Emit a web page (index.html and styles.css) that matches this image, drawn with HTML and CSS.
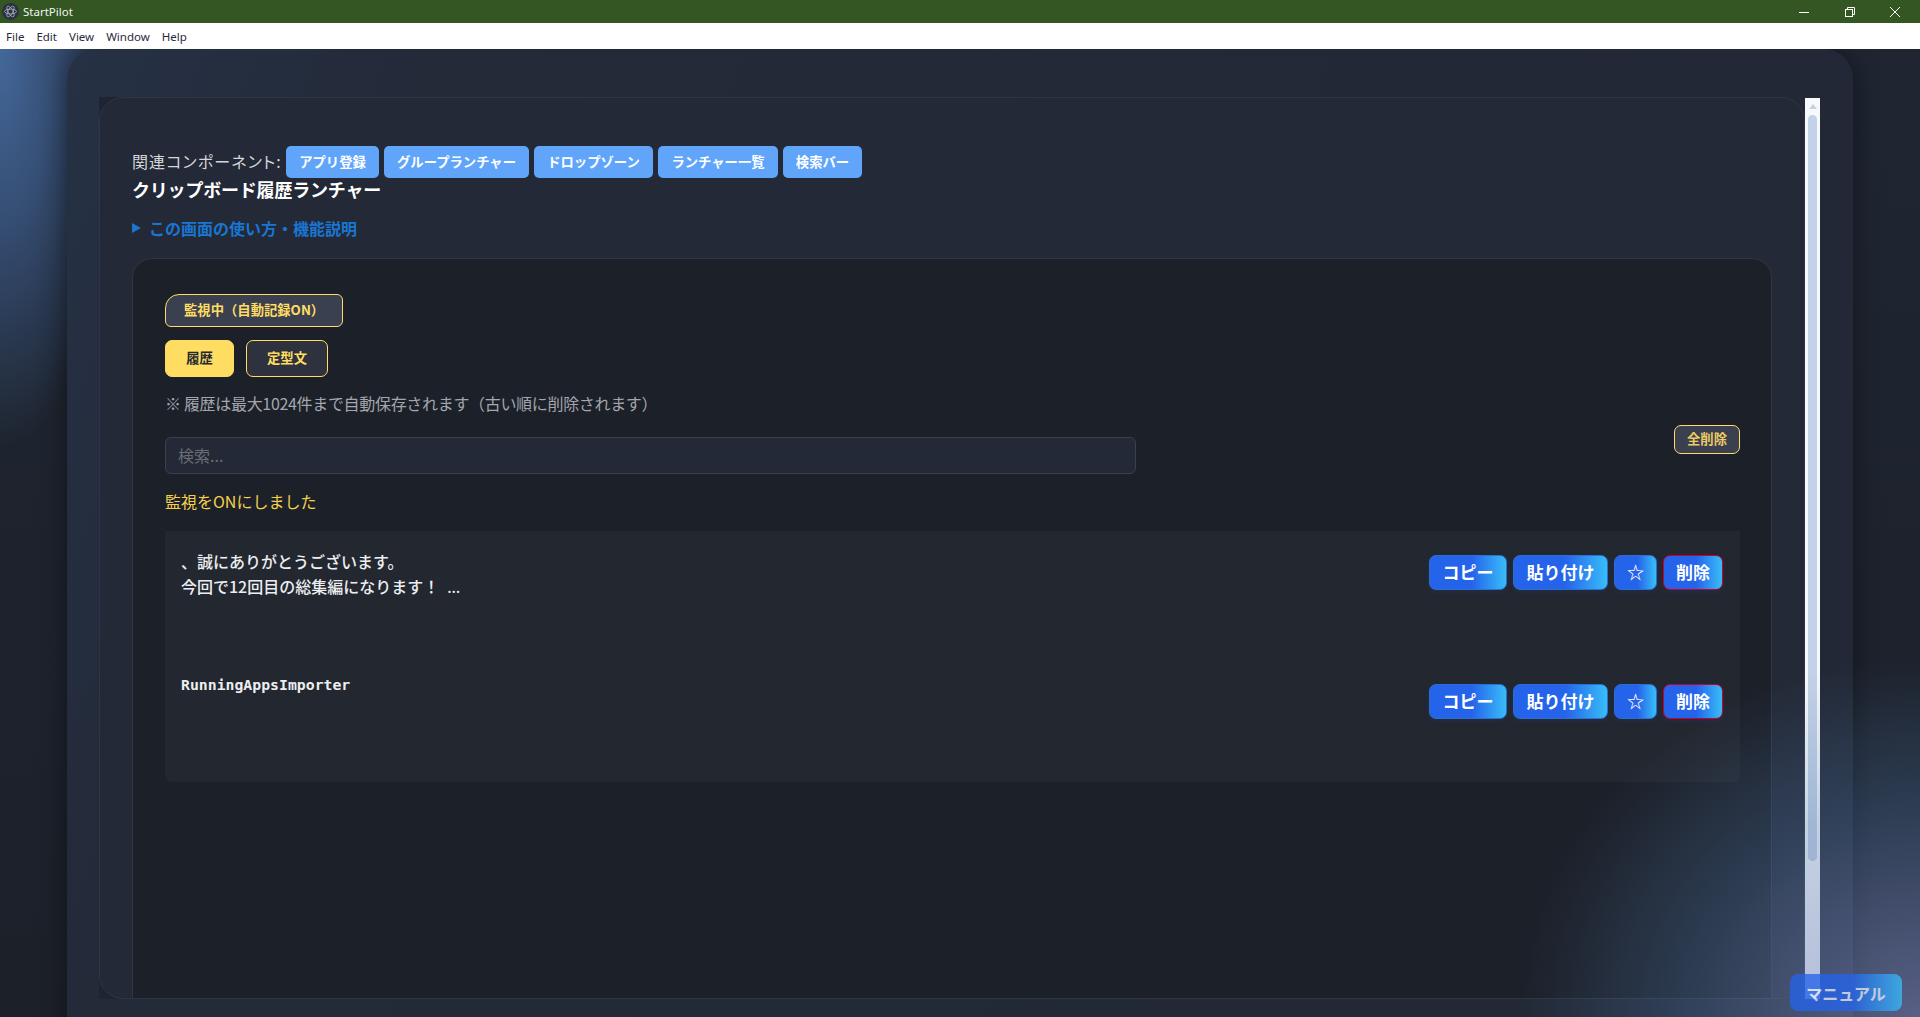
FILE: index.html
```html
<!DOCTYPE html>
<html lang="ja">
<head>
<meta charset="utf-8">
<title>StartPilot</title>
<link rel="stylesheet" href="styles.css">
</head>
<body>
<header class="titlebar">
  <div class="app-id">
    <svg class="app-icon" width="17" height="17" viewBox="0 0 17 17" fill="none" stroke="#a9b4c4" stroke-width="0.8">
      <circle cx="8.5" cy="8.5" r="8.5" fill="#2b3140" stroke="none"/>
      <ellipse cx="8.5" cy="8.5" rx="6" ry="2.4"/>
      <ellipse cx="8.5" cy="8.5" rx="6" ry="2.4" transform="rotate(60 8.5 8.5)"/>
      <ellipse cx="8.5" cy="8.5" rx="6" ry="2.4" transform="rotate(120 8.5 8.5)"/>
    </svg>
    <span>StartPilot</span>
  </div>
  <div class="win-controls">
    <span class="win-btn"><svg width="12" height="12" viewBox="0 0 12 12" stroke="#fff" fill="none"><path d="M1 6.5h10"/></svg></span>
    <span class="win-btn"><svg width="12" height="12" viewBox="0 0 12 12" stroke="#fff" fill="none"><rect x="1.5" y="3.5" width="7" height="7"/><path d="M3.5 3.5v-2h7v7h-2"/></svg></span>
    <span class="win-btn"><svg width="12" height="12" viewBox="0 0 12 12" stroke="#fff" fill="none"><path d="M1 1l10 10M11 1L1 11"/></svg></span>
  </div>
</header>
<nav class="menubar">
  <span>File</span><span>Edit</span><span>View</span><span>Window</span><span>Help</span>
</nav>
<main class="stage">
  <div class="outer">
    <div class="inner-wrap">
      <div class="inner">
        <div class="related">
          <span class="related-label">関連コンポーネント:</span>
          <button class="rel-btn w93">アプリ登録</button>
          <button class="rel-btn w145">グループランチャー</button>
          <button class="rel-btn w119">ドロップゾーン</button>
          <button class="rel-btn w120">ランチャー一覧</button>
          <button class="rel-btn w80">検索バー</button>
        </div>
        <h1 class="title">クリップボード履歴ランチャー</h1>
        <div class="summary"><span class="tri"></span>この画面の使い方・機能説明</div>
        <section class="card">
          <div class="status">監視中（自動記録ON）</div>
          <div class="tabs">
            <button class="tab tab-on">履歴</button>
            <button class="tab tab-off">定型文</button>
          </div>
          <p class="note">※ 履歴は最大1024件まで自動保存されます（古い順に削除されます）</p>
          <div class="search-row">
            <input class="search" placeholder="検索...">
            <button class="clear-all">全削除</button>
          </div>
          <p class="message">監視をONにしました</p>
          <div class="list">
            <div class="row row-first">
              <div class="clip clip-a">、誠にありがとうございます。<br>今回で12回目の総集編になります！<span class="ell">…</span></div>
              <div class="actions">
                <button class="act w78">コピー</button>
                <button class="act w95">貼り付け</button>
                <button class="act w43">☆</button>
                <button class="act w60 danger">削除</button>
              </div>
            </div>
            <div class="row row-second">
              <div class="clip clip-b">RunningAppsImporter</div>
              <div class="actions">
                <button class="act w78">コピー</button>
                <button class="act w95">貼り付け</button>
                <button class="act w43">☆</button>
                <button class="act w60 danger">削除</button>
              </div>
            </div>
          </div>
        </section>
      </div>
      <div class="scrollbar">
        <span class="sb-arrow"></span>
        <span class="sb-thumb"></span>
      </div>
    </div>
  </div>
  <div class="glow"></div>
  <button class="manual">マニュアル</button>
</main>
</body>
</html>
```
FILE: styles.css
```css
* { box-sizing: border-box; }
html, body { margin: 0; height: 100%; overflow: hidden; }
body {
  display: flex;
  flex-direction: column;
  height: 1017px;
  font-family: "Noto Sans CJK JP", "Noto Sans", sans-serif;
  background: #1c2029;
}
button { font-family: inherit; cursor: pointer; }

.titlebar {
  height: 23px;
  flex: none;
  display: flex;
  justify-content: space-between;
  align-items: center;
  background: #335622;
  color: #f2f5ee;
  font: 11.5px "Noto Sans", sans-serif;
}
.app-id { display: flex; align-items: center; gap: 4px; padding-left: 2px; }
.app-icon { display: block; }
.win-controls { display: flex; padding-right: 2px; }
.win-btn { width: 45.5px; height: 23px; display: flex; align-items: center; justify-content: center; }

.menubar {
  height: 26px;
  flex: none;
  display: flex;
  align-items: center;
  gap: 12px;
  padding-left: 6px;
  background: #fff;
  color: #2a2a3a;
  font: 11.5px "Noto Sans", sans-serif;
}

.stage {
  position: relative;
  flex: 1;
  min-height: 0;
  overflow: hidden;
  background:
    radial-gradient(ellipse 130px 400px at 0 0, #44689b 0%, rgba(60,90,135,.75) 45%, rgba(40,55,80,0) 100%),
    linear-gradient(#1f2632, #1c2029);
}
.outer {
  margin-left: 67px;
  width: 1786px;
  height: 1010px;
  padding: 48px 33px 60px 32px;
  border-radius: 30px;
  background: linear-gradient(110deg, #263145 0%, #232a38 18%, #222835 100%);
  box-shadow: 0 0 26px rgba(0,0,0,.45);
}
.inner-wrap {
  display: flex;
  height: 902px;
  background: linear-gradient(90deg, #1e2433 40px, transparent 40px);
}
.inner {
  flex: 1;
  min-width: 0;
  overflow: hidden;
  padding: 48px 32px 0;
  border: 1px solid #2e3544;
  border-radius: 24px;
  background: #232936;
}
.scrollbar {
  flex: none;
  width: 15px;
  margin-top: 1px;
  display: flex;
  flex-direction: column;
  align-items: center;
  background: #f8f9fc;
}
.sb-arrow {
  flex: none;
  width: 0;
  height: 0;
  margin-top: 6px;
  border-left: 4.5px solid transparent;
  border-right: 4.5px solid transparent;
  border-bottom: 5px solid #c3d2e6;
}
.sb-thumb {
  flex: none;
  width: 9px;
  height: 746px;
  margin-top: 6px;
  border-radius: 5px;
  background: #c3d2e6;
}

.related { display: flex; align-items: center; height: 32px; color: #d4d6da; font-size: 16px; }
.related-label { width: 154px; font-feature-settings: "palt"; letter-spacing: 1.1px; white-space: nowrap; position: relative; top: -1px; }
.rel-btn {
  height: 32px;
  margin-right: 5px;
  padding: 0 0 2px;
  border: 0;
  border-radius: 5px;
  background: #60a5fa;
  color: #fff;
  font-size: 13.33px;
  font-weight: 700;
}
.w93 { width: 93px; }
.w145 { width: 145px; }
.w119 { width: 119px; }
.w120 { width: 120px; }
.w80 { width: 79px; margin-right: 0; }

.title {
  margin: 0 0 2px;
  color: #fff;
  font-size: 18px;
  font-weight: 700;
  letter-spacing: -.2px;
  line-height: 22px;
}
.summary {
  display: flex;
  align-items: center;
  margin-top: 17px;
  height: 22px;
  color: #1976d2;
  font-size: 16px;
  font-weight: 700;
}
.tri {
  width: 0;
  height: 0;
  margin-right: 8px;
  border-left: 9px solid #1976d2;
  border-top: 5.5px solid transparent;
  border-bottom: 5.5px solid transparent;
}

.card {
  margin-top: 19px;
  min-height: 900px;
  padding: 35px 31px 0 32px;
  border: 1px solid #2e3544;
  border-radius: 20px;
  background: #1c2029;
}
.status {
  width: 178px;
  height: 33px;
  padding-left: 18px;
  border: 1px solid #ffdd63;
  border-radius: 14px 6px 6px 6px;
  background: #3a4050;
  color: #ffdd63;
  font-size: 13.33px;
  font-weight: 700;
  line-height: 30px;
}
.tabs { display: flex; gap: 12px; margin-top: 13px; }
.tab { height: 37px; padding: 0 0 2px; border-radius: 7px; font-size: 13.33px; font-weight: 700; }
.tab-on { width: 69px; border: 1px solid #ffdd63; background: #ffdd63; color: #23272f; }
.tab-off { width: 82px; border: 1px solid #ffdd63; background: #2d323e; color: #ffdd63; }
.note { margin: 15px 0 11px; color: #a3a6ad; font-size: 16px; letter-spacing: -.32px; line-height: 22px; }
.search-row { display: flex; justify-content: space-between; align-items: flex-start; }
.search {
  width: 971px;
  height: 37px;
  margin-top: 12px;
  padding: 0 12px 2px;
  border: 1px solid #39404f;
  border-radius: 6px;
  background: #232936;
  color: #ddd;
  font-family: inherit;
  font-size: 16px;
}
.search::placeholder { color: #6a6d74; }
.clear-all {
  width: 66px;
  height: 29px;
  padding: 0 0 2px;
  border: 1px solid #ffdd63;
  border-radius: 7px;
  background: #3a4050;
  color: #eccb64;
  font-size: 13.33px;
  font-weight: 700;
}
.message { margin: 16px 0 19px; color: #f5d04a; font-size: 16px; line-height: 22px; }
.list { height: 251px; border-radius: 0 0 7px 7px; background: #23272f; }
.row { display: flex; justify-content: space-between; align-items: flex-start; padding: 24px 17px 0 16px; }
.row-first { height: 129px; }
.clip { color: #eceef0; font-weight: 500; }
.clip-a { margin-top: -6px; font-size: 16px; line-height: 25px; }
.ell { margin-left: 8px; font-family: "Noto Sans", sans-serif; }
.clip-b { margin-top: -12px; font-family: "DejaVu Sans Mono", monospace; font-size: 14.8px; font-weight: 700; line-height: 25px; }
.actions { display: flex; gap: 6px; }
.act {
  height: 35px;
  padding: 0 0 2px;
  border: 1px solid #2a70cf;
  border-radius: 7px;
  background: linear-gradient(90deg, #2563eb 55%, #38bdf8 100%);
  color: #fff;
  font-size: 17px;
  font-weight: 700;
  box-shadow: 0 2px 6px rgba(37,99,235,.12);
}
.w78 { width: 78px; }
.w95 { width: 95px; }
.w43 { width: 43px; }
.w60 { width: 60px; }
.danger { border-color: #c8002a; }

.glow {
  position: absolute;
  inset: 0;
  pointer-events: none;
  background:
    radial-gradient(ellipse 400px 360px at 100% 100%, rgba(125,135,190,.62) 0%, rgba(80,120,170,.3) 60%, rgba(60,110,150,0) 100%);
}
.manual {
  position: absolute;
  left: 1790px;
  top: 925px;
  width: 112px;
  height: 37px;
  padding: 0;
  border: 0;
  border-radius: 8px;
  background: linear-gradient(90deg, #2563eb 55%, #38bdf8 100%);
  color: #e4eafa;
  font-size: 16px;
  font-weight: 700;
  opacity: .78;
}
```
